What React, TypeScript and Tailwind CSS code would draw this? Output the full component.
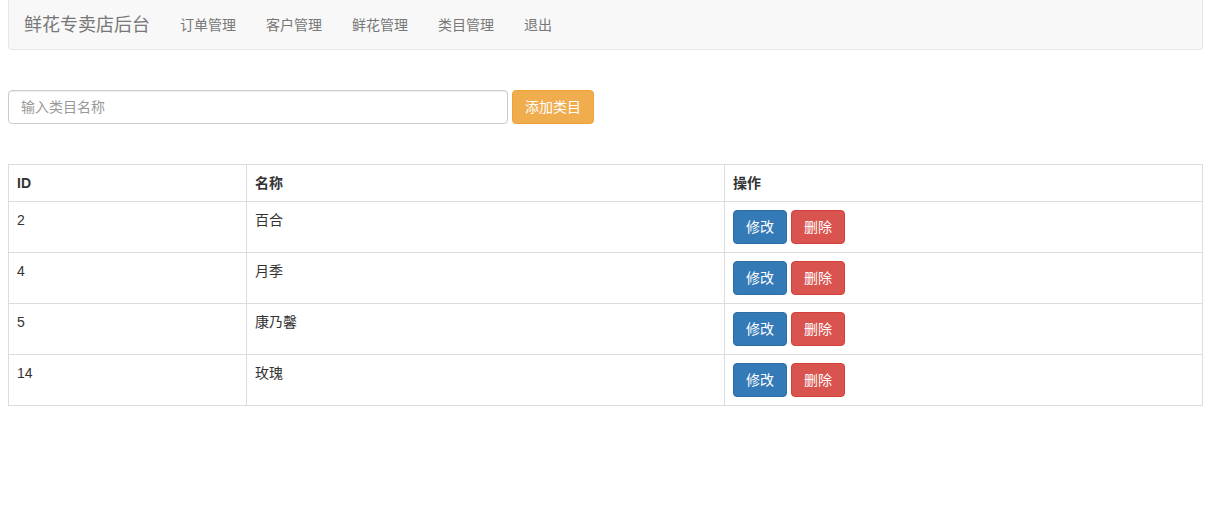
import React from "react";

const rows = [
  { id: 2, name: "百合" },
  { id: 4, name: "月季" },
  { id: 5, name: "康乃馨" },
  { id: 14, name: "玫瑰" },
];

const navItems = ["订单管理", "客户管理", "鲜花管理", "类目管理", "退出"];

export default function App() {
  return (
    <div className="min-h-[527px] bg-white pl-2 pr-[5px] text-[14px] leading-[20px] text-[#333] font-['Liberation_Sans','Noto_Sans_CJK_SC',sans-serif]">
      {/* 导航栏 */}
      <nav className="flex h-[50px] items-center rounded-b border-x border-b border-[#e7e7e7] bg-[#f8f8f8]">
        <span className="px-[15px] text-[18px] leading-[20px] text-[#777]">鲜花专卖店后台</span>
        <ul className="flex">
          {navItems.map((item) => (
            <li key={item} className="px-[15px] text-[#777]">
              {item}
            </li>
          ))}
        </ul>
      </nav>

      {/* 添加类目 */}
      <div className="mt-10 flex gap-1">
        <input
          className="h-[34px] w-[500px] rounded border border-[#ccc] px-3 text-[14px] text-[#555] shadow-[inset_0_1px_1px_rgba(0,0,0,0.075)] outline-none placeholder:text-[#999]"
          placeholder="输入类目名称"
        />
        <button className="h-[34px] rounded border border-[#eea236] bg-[#f0ad4e] px-3 text-white">
          添加类目
        </button>
      </div>

      {/* 类目列表 */}
      <table className="mt-10 w-full border-collapse border border-[#ddd]">
        <thead>
          <tr>
            <th className="w-[238px] border border-[#ddd] p-2 text-left align-top font-bold">ID</th>
            <th className="w-[478px] border border-[#ddd] p-2 text-left align-top font-bold">名称</th>
            <th className="border border-[#ddd] p-2 text-left align-top font-bold">操作</th>
          </tr>
        </thead>
        <tbody>
          {rows.map((row) => (
            <tr key={row.id}>
              <td className="border border-[#ddd] p-2 align-top">{row.id}</td>
              <td className="border border-[#ddd] p-2 align-top">{row.name}</td>
              <td className="border border-[#ddd] p-2 align-top">
                <div className="flex gap-1">
                  <button className="h-[34px] rounded border border-[#2e6da4] bg-[#337ab7] px-3 text-white">
                    修改
                  </button>
                  <button className="h-[34px] rounded border border-[#d43f3a] bg-[#d9534f] px-3 text-white">
                    删除
                  </button>
                </div>
              </td>
            </tr>
          ))}
        </tbody>
      </table>
    </div>
  );
}
